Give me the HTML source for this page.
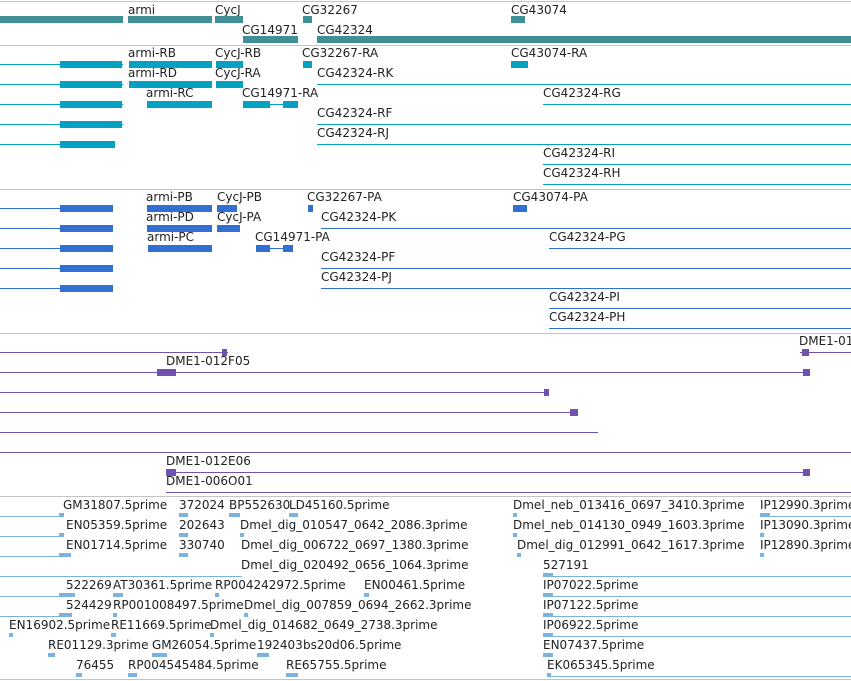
<!DOCTYPE html>
<html><head><meta charset="utf-8"><style>
body{margin:0;width:851px;height:681px;background:#fff;position:relative;overflow:hidden;font-family:"DejaVu Sans","Liberation Sans",sans-serif;font-size:12px}
div{position:absolute}
.t{line-height:14px;color:#222;white-space:nowrap}
.s{left:0;width:851px;height:1px;background:#c4c4c4}
.g{background:#3f8f94}
.c{background:#06a0c0}
.p{background:#316fd2}
.v{background:#7052b0}
.w{background:#7ab3e0}
.l{height:1px}
.b{height:7px}
</style></head><body>
<div class="s" style="top:1px"></div>
<div class="s" style="top:45px"></div>
<div class="s" style="top:189px"></div>
<div class="s" style="top:333px"></div>
<div class="s" style="top:496px"></div>
<div class="s" style="top:679px"></div>

<div class="t" style="left:128px;top:3px">armi</div>
<div class="t" style="left:215px;top:3px">CycJ</div>
<div class="t" style="left:302px;top:3px">CG32267</div>
<div class="t" style="left:511px;top:3px">CG43074</div>
<div class="g b" style="left:0;width:123px;top:16px"></div>
<div class="g b" style="left:128px;width:84px;top:16px"></div>
<div class="g b" style="left:215px;width:28px;top:16px"></div>
<div class="g b" style="left:303px;width:9px;top:16px"></div>
<div class="g b" style="left:511px;width:14px;top:16px"></div>
<div class="t" style="left:242px;top:23px">CG14971</div>
<div class="t" style="left:317px;top:23px">CG42324</div>
<div class="g b" style="left:243px;width:55px;top:36px"></div>
<div class="g b" style="left:317px;width:534px;top:36px"></div>

<div class="t" style="left:128px;top:46px">armi-RB</div>
<div class="t" style="left:215px;top:46px">CycJ-RB</div>
<div class="t" style="left:302px;top:46px">CG32267-RA</div>
<div class="t" style="left:511px;top:46px">CG43074-RA</div>
<div class="t" style="left:128px;top:66px">armi-RD</div>
<div class="t" style="left:215px;top:66px">CycJ-RA</div>
<div class="t" style="left:317px;top:66px">CG42324-RK</div>
<div class="t" style="left:146px;top:86px">armi-RC</div>
<div class="t" style="left:242px;top:86px">CG14971-RA</div>
<div class="t" style="left:543px;top:86px">CG42324-RG</div>
<div class="t" style="left:317px;top:106px">CG42324-RF</div>
<div class="t" style="left:317px;top:126px">CG42324-RJ</div>
<div class="t" style="left:543px;top:146px">CG42324-RI</div>
<div class="t" style="left:543px;top:166px">CG42324-RH</div>

<div class="c l" style="left:0;width:123px;top:64px"></div>
<div class="c l" style="left:0;width:123px;top:84px"></div>
<div class="c l" style="left:0;width:123px;top:104px"></div>
<div class="c l" style="left:0;width:123px;top:124px"></div>
<div class="c l" style="left:0;width:115px;top:144px"></div>
<div class="c b" style="left:60px;width:62px;top:61px"></div>
<div class="c b" style="left:60px;width:62px;top:81px"></div>
<div class="c b" style="left:60px;width:62px;top:101px"></div>
<div class="c b" style="left:60px;width:62px;top:121px"></div>
<div class="c b" style="left:60px;width:55px;top:141px"></div>
<div class="c b" style="left:129px;width:83px;top:61px"></div>
<div class="c b" style="left:129px;width:83px;top:81px"></div>
<div class="c b" style="left:147px;width:65px;top:101px"></div>
<div class="c b" style="left:216px;width:27px;top:61px"></div>
<div class="c b" style="left:216px;width:27px;top:81px"></div>
<div class="c b" style="left:303px;width:9px;top:61px"></div>
<div class="c b" style="left:511px;width:17px;top:61px"></div>
<div class="c b" style="left:243px;width:27px;top:101px"></div>
<div class="c l" style="left:270px;width:15px;top:104px"></div>
<div class="c b" style="left:283px;width:15px;top:101px"></div>
<div class="c l" style="left:317px;width:534px;top:84px"></div>
<div class="c l" style="left:317px;width:534px;top:124px"></div>
<div class="c l" style="left:317px;width:534px;top:144px"></div>
<div class="c l" style="left:543px;width:308px;top:104px"></div>
<div class="c l" style="left:543px;width:308px;top:164px"></div>
<div class="c l" style="left:543px;width:308px;top:184px"></div>

<div class="t" style="left:146px;top:190px">armi-PB</div>
<div class="t" style="left:217px;top:190px">CycJ-PB</div>
<div class="t" style="left:307px;top:190px">CG32267-PA</div>
<div class="t" style="left:513px;top:190px">CG43074-PA</div>
<div class="t" style="left:146px;top:210px">armi-PD</div>
<div class="t" style="left:217px;top:210px">CycJ-PA</div>
<div class="t" style="left:321px;top:210px">CG42324-PK</div>
<div class="t" style="left:147px;top:230px">armi-PC</div>
<div class="t" style="left:255px;top:230px">CG14971-PA</div>
<div class="t" style="left:549px;top:230px">CG42324-PG</div>
<div class="t" style="left:321px;top:250px">CG42324-PF</div>
<div class="t" style="left:321px;top:270px">CG42324-PJ</div>
<div class="t" style="left:549px;top:290px">CG42324-PI</div>
<div class="t" style="left:549px;top:310px">CG42324-PH</div>

<div class="p l" style="left:0;width:113px;top:208px"></div>
<div class="p l" style="left:0;width:113px;top:228px"></div>
<div class="p l" style="left:0;width:113px;top:248px"></div>
<div class="p l" style="left:0;width:113px;top:268px"></div>
<div class="p l" style="left:0;width:113px;top:288px"></div>
<div class="p b" style="left:60px;width:53px;top:205px"></div>
<div class="p b" style="left:60px;width:53px;top:225px"></div>
<div class="p b" style="left:60px;width:53px;top:245px"></div>
<div class="p b" style="left:60px;width:53px;top:265px"></div>
<div class="p b" style="left:60px;width:53px;top:285px"></div>
<div class="p b" style="left:147px;width:65px;top:205px"></div>
<div class="p b" style="left:147px;width:65px;top:225px"></div>
<div class="p b" style="left:148px;width:64px;top:245px"></div>
<div class="p b" style="left:217px;width:20px;top:205px"></div>
<div class="p b" style="left:217px;width:23px;top:225px"></div>
<div class="p b" style="left:308px;width:5px;top:205px"></div>
<div class="p b" style="left:513px;width:14px;top:205px"></div>
<div class="p b" style="left:256px;width:14px;top:245px"></div>
<div class="p l" style="left:270px;width:15px;top:248px"></div>
<div class="p b" style="left:283px;width:10px;top:245px"></div>
<div class="p l" style="left:321px;width:530px;top:228px"></div>
<div class="p l" style="left:321px;width:530px;top:268px"></div>
<div class="p l" style="left:321px;width:530px;top:288px"></div>
<div class="p l" style="left:549px;width:302px;top:248px"></div>
<div class="p l" style="left:549px;width:302px;top:308px"></div>
<div class="p l" style="left:549px;width:302px;top:328px"></div>

<div class="t" style="left:799px;top:334px">DME1-012F05</div>
<div class="t" style="left:166px;top:354px">DME1-012F05</div>
<div class="t" style="left:166px;top:454px">DME1-012E06</div>
<div class="t" style="left:166px;top:474px">DME1-006O01</div>
<div class="v l" style="left:0;width:228px;top:352px"></div>
<div class="v b" style="left:222px;width:5px;top:349px"></div>
<div class="v l" style="left:800px;width:51px;top:352px"></div>
<div class="v b" style="left:802px;width:7px;top:349px"></div>
<div class="v l" style="left:0;width:810px;top:372px"></div>
<div class="v b" style="left:157px;width:19px;top:369px"></div>
<div class="v b" style="left:803px;width:7px;top:369px"></div>
<div class="v l" style="left:0;width:549px;top:392px"></div>
<div class="v b" style="left:544px;width:5px;top:389px"></div>
<div class="v l" style="left:0;width:578px;top:412px"></div>
<div class="v b" style="left:570px;width:8px;top:409px"></div>
<div class="v l" style="left:0;width:598px;top:432px"></div>
<div class="v l" style="left:0;width:851px;top:452px"></div>
<div class="v l" style="left:166px;width:644px;top:472px"></div>
<div class="v b" style="left:166px;width:10px;top:469px"></div>
<div class="v b" style="left:803px;width:7px;top:469px"></div>
<div class="v l" style="left:166px;width:685px;top:492px"></div>

<div class="t" style="left:63px;top:498px">GM31807.5prime</div>
<div class="t" style="left:179px;top:498px">372024</div>
<div class="t" style="left:229px;top:498px">BP552630</div>
<div class="t" style="left:289px;top:498px">LD45160.5prime</div>
<div class="t" style="left:513px;top:498px">Dmel_neb_013416_0697_3410.3prime</div>
<div class="t" style="left:760px;top:498px">IP12990.3prime</div>
<div class="t" style="left:66px;top:518px">EN05359.5prime</div>
<div class="t" style="left:179px;top:518px">202643</div>
<div class="t" style="left:240px;top:518px">Dmel_dig_010547_0642_2086.3prime</div>
<div class="t" style="left:513px;top:518px">Dmel_neb_014130_0949_1603.3prime</div>
<div class="t" style="left:760px;top:518px">IP13090.3prime</div>
<div class="t" style="left:66px;top:538px">EN01714.5prime</div>
<div class="t" style="left:179px;top:538px">330740</div>
<div class="t" style="left:241px;top:538px">Dmel_dig_006722_0697_1380.3prime</div>
<div class="t" style="left:517px;top:538px">Dmel_dig_012991_0642_1617.3prime</div>
<div class="t" style="left:760px;top:538px">IP12890.3prime</div>
<div class="t" style="left:241px;top:558px">Dmel_dig_020492_0656_1064.3prime</div>
<div class="t" style="left:543px;top:558px">527191</div>
<div class="t" style="left:66px;top:578px">522269</div>
<div class="t" style="left:113px;top:578px">AT30361.5prime</div>
<div class="t" style="left:215px;top:578px">RP004242972.5prime</div>
<div class="t" style="left:364px;top:578px">EN00461.5prime</div>
<div class="t" style="left:543px;top:578px">IP07022.5prime</div>
<div class="t" style="left:66px;top:598px">524429</div>
<div class="t" style="left:113px;top:598px">RP001008497.5prime</div>
<div class="t" style="left:244px;top:598px">Dmel_dig_007859_0694_2662.3prime</div>
<div class="t" style="left:543px;top:598px">IP07122.5prime</div>
<div class="t" style="left:9px;top:618px">EN16902.5prime</div>
<div class="t" style="left:111px;top:618px">RE11669.5prime</div>
<div class="t" style="left:210px;top:618px">Dmel_dig_014682_0649_2738.3prime</div>
<div class="t" style="left:543px;top:618px">IP06922.5prime</div>
<div class="t" style="left:48px;top:638px">RE01129.3prime</div>
<div class="t" style="left:152px;top:638px">GM26054.5prime</div>
<div class="t" style="left:257px;top:638px">192403</div>
<div class="t" style="left:303px;top:638px">bs20d06.5prime</div>
<div class="t" style="left:543px;top:638px">EN07437.5prime</div>
<div class="t" style="left:76px;top:658px">76455</div>
<div class="t" style="left:128px;top:658px">RP004545484.5prime</div>
<div class="t" style="left:286px;top:658px">RE65755.5prime</div>
<div class="t" style="left:547px;top:658px">EK065345.5prime</div>

<div class="w l" style="left:0;width:63px;top:516px"></div>
<div class="w l" style="left:0;width:63px;top:536px"></div>
<div class="w l" style="left:0;width:70px;top:556px"></div>
<div class="w l" style="left:0;width:242px;top:576px"></div>
<div class="w l" style="left:0;width:75px;top:596px"></div>
<div class="w l" style="left:0;width:70px;top:616px"></div>
<div class="w b" style="left:59px;width:5px;top:513px;height:4px"></div>
<div class="w b" style="left:59px;width:5px;top:533px;height:4px"></div>
<div class="w b" style="left:59px;width:12px;top:553px;height:4px"></div>
<div class="w b" style="left:59px;width:16px;top:593px;height:4px"></div>
<div class="w b" style="left:59px;width:13px;top:613px;height:4px"></div>
<div class="w b" style="left:179px;width:9px;top:513px;height:4px"></div>
<div class="w b" style="left:229px;width:11px;top:513px;height:4px"></div>
<div class="w b" style="left:289px;width:9px;top:513px;height:4px"></div>
<div class="w b" style="left:179px;width:9px;top:533px;height:4px"></div>
<div class="w b" style="left:179px;width:9px;top:553px;height:4px"></div>
<div class="w b" style="left:113px;width:10px;top:593px;height:4px"></div>
<div class="w b" style="left:152px;width:15px;top:653px;height:4px"></div>
<div class="w b" style="left:257px;width:12px;top:653px;height:4px"></div>
<div class="w b" style="left:286px;width:12px;top:673px;height:4px"></div>
<div class="w b" style="left:128px;width:9px;top:673px;height:4px"></div>
<div class="w b" style="left:76px;width:6px;top:673px;height:4px"></div>
<div class="w b" style="left:48px;width:7px;top:653px;height:4px"></div>
<div class="w b" style="left:9px;width:4px;top:633px;height:4px"></div>
<div class="w b" style="left:113px;width:4px;top:613px;height:4px"></div>
<div class="w b" style="left:111px;width:5px;top:633px;height:4px"></div>
<div class="w b" style="left:210px;width:4px;top:633px;height:4px"></div>
<div class="w b" style="left:215px;width:4px;top:593px;height:4px"></div>
<div class="w b" style="left:244px;width:4px;top:613px;height:4px"></div>
<div class="w b" style="left:240px;width:4px;top:533px;height:4px"></div>
<div class="w b" style="left:364px;width:5px;top:593px;height:4px"></div>
<div class="w b" style="left:513px;width:4px;top:513px;height:4px"></div>
<div class="w b" style="left:513px;width:4px;top:533px;height:4px"></div>
<div class="w b" style="left:517px;width:4px;top:553px;height:4px"></div>
<div class="w b" style="left:760px;width:4px;top:533px;height:4px"></div>
<div class="w b" style="left:760px;width:4px;top:553px;height:4px"></div>
<div class="w l" style="left:760px;width:91px;top:516px"></div>
<div class="w b" style="left:760px;width:10px;top:513px;height:4px"></div>
<div class="w l" style="left:543px;width:308px;top:576px"></div>
<div class="w l" style="left:543px;width:308px;top:596px"></div>
<div class="w l" style="left:543px;width:308px;top:616px"></div>
<div class="w l" style="left:543px;width:308px;top:636px"></div>
<div class="w b" style="left:543px;width:10px;top:573px;height:4px"></div>
<div class="w b" style="left:543px;width:10px;top:593px;height:4px"></div>
<div class="w b" style="left:543px;width:10px;top:613px;height:4px"></div>
<div class="w b" style="left:543px;width:10px;top:633px;height:4px"></div>
<div class="w b" style="left:543px;width:10px;top:653px;height:4px"></div>
<div class="w l" style="left:547px;width:304px;top:676px"></div>
<div class="w b" style="left:547px;width:4px;top:673px;height:4px"></div>
</body></html>
